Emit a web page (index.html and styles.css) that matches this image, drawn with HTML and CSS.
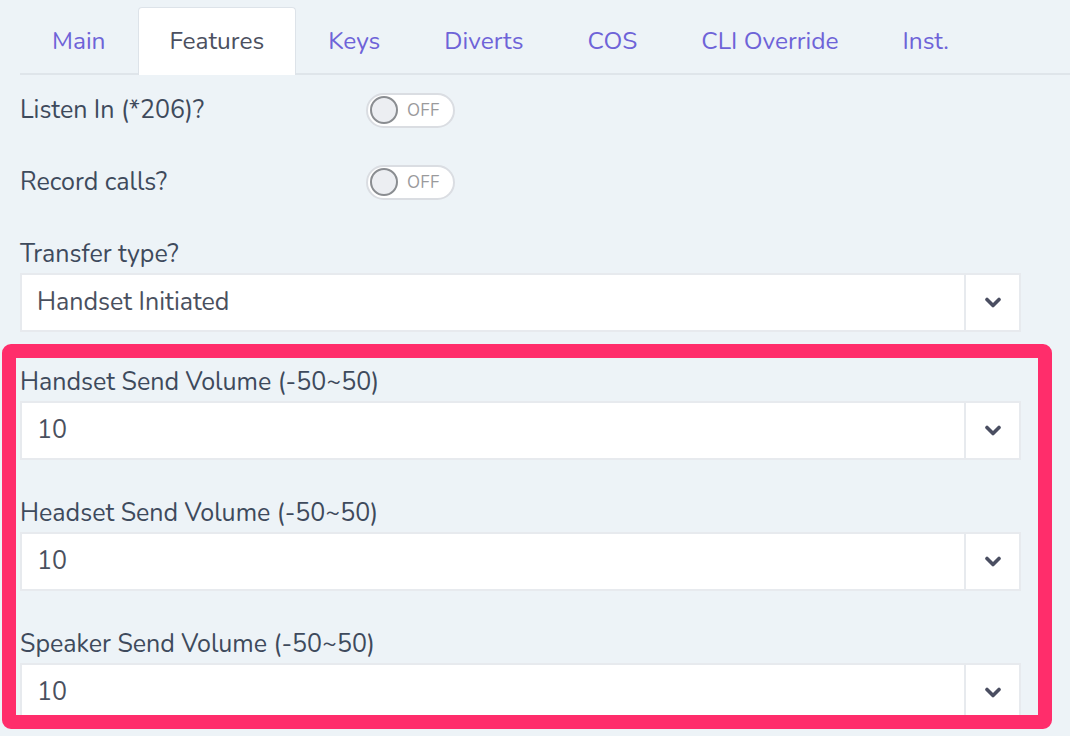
FILE: index.html
```html
<!DOCTYPE html>
<html lang="en">
<head>
<meta charset="utf-8">
<title>Features</title>
<link rel="stylesheet" href="styles.css">
</head>
<body>
<div class="page">
  <ul class="tabs">
    <li class="tab">Main</li>
    <li class="tab active">Features</li>
    <li class="tab">Keys</li>
    <li class="tab">Diverts</li>
    <li class="tab">COS</li>
    <li class="tab">CLI Override</li>
    <li class="tab">Inst.</li>
  </ul>
  <div class="form">
    <div class="toggle-row">
      <span class="label">Listen In (*206)?</span>
      <span class="toggle"><span class="knob"></span><span class="toggle-text">OFF</span></span>
    </div>
    <div class="toggle-row">
      <span class="label">Record calls?</span>
      <span class="toggle"><span class="knob"></span><span class="toggle-text">OFF</span></span>
    </div>
    <div class="group first">
      <div class="label">Transfer type?</div>
      <div class="select"><span class="value">Handset Initiated</span><span class="arrow"><svg width="16" height="11" viewBox="0 0 16 11"><path d="M2 2.5 L8 8.5 L14 2.5" fill="none" stroke="#4a4e61" stroke-width="3.6" stroke-linecap="round" stroke-linejoin="round"/></svg></span></div>
    </div>
    <div class="highlight-area">
      <div class="group">
        <div class="label">Handset Send Volume (-50~50)</div>
        <div class="select"><span class="value">10</span><span class="arrow"><svg width="16" height="11" viewBox="0 0 16 11"><path d="M2 2.5 L8 8.5 L14 2.5" fill="none" stroke="#4a4e61" stroke-width="3.6" stroke-linecap="round" stroke-linejoin="round"/></svg></span></div>
      </div>
      <div class="group">
        <div class="label">Headset Send Volume (-50~50)</div>
        <div class="select"><span class="value">10</span><span class="arrow"><svg width="16" height="11" viewBox="0 0 16 11"><path d="M2 2.5 L8 8.5 L14 2.5" fill="none" stroke="#4a4e61" stroke-width="3.6" stroke-linecap="round" stroke-linejoin="round"/></svg></span></div>
      </div>
      <div class="group">
        <div class="label">Speaker Send Volume (-50~50)</div>
        <div class="select"><span class="value">10</span><span class="arrow"><svg width="16" height="11" viewBox="0 0 16 11"><path d="M2 2.5 L8 8.5 L14 2.5" fill="none" stroke="#4a4e61" stroke-width="3.6" stroke-linecap="round" stroke-linejoin="round"/></svg></span></div>
      </div>
      <div class="highlight"></div>
    </div>
  </div>
</div>
</body>
</html>
```
FILE: styles.css
```css
* { box-sizing: border-box; }
html, body { margin: 0; padding: 0; }
body {
  background: #edf3f7;
  font-family: "Nunito", "Open Sans", "Noto Sans", sans-serif;
  color: #3e4a5c;
  width: 1070px;
  height: 736px;
  overflow: hidden;
}
.page { padding-left: 20px; padding-top: 7px; }
.tabs {
  list-style: none;
  margin: 0;
  padding: 0;
  display: flex;
  border-bottom: 2px solid #dfe5ea;
  height: 68px;
}
.tab {
  padding: 0 31px;
  font-size: 24.5px;
  line-height: 66px;
  color: #6e63d8;
  border: 1px solid transparent;
  border-bottom: none;
  border-radius: 4px 4px 0 0;
}
.tab.active {
  background: #ffffff;
  color: #4b5060;
  border-color: #dde3e9;
  height: 68px;
}
.form { padding-right: 49px; padding-top: 17px; }
.label { font-size: 25px; line-height: 30px; color: #3e4a5c; }
.toggle-row {
  display: grid;
  grid-template-columns: 346px auto;
  align-items: center;
  height: 36px;
  margin-bottom: 36px;
}
.toggle {
  width: 89px;
  height: 35px;
  border: 2px solid #dadde2;
  border-radius: 18px;
  background: #ffffff;
  display: flex;
  align-items: center;
  padding-left: 2px;
  gap: 9px;
}
.knob {
  width: 28px;
  height: 28px;
  border-radius: 50%;
  border: 2px solid #8a8d91;
  background: #eceef2;
}
.toggle-text { font-size: 17px; color: #9a9a9c; letter-spacing: 0.3px; }
.group { margin-bottom: 38px; }
.group.first { padding-top: 3px; margin-bottom: 35px; }
.group .label { margin-bottom: 4px; }
.select {
  display: flex;
  height: 59px;
  background: #ffffff;
  border: 2px solid #e7eaee;
}
.value {
  flex: 1;
  padding-left: 15px;
  font-size: 25px;
  line-height: 55px;
  color: #4a505e;
}
.arrow {
  width: 55px;
  border-left: 2px solid #e7eaee;
  display: flex;
  align-items: center;
  justify-content: center;
}
.highlight-area { position: relative; }
.highlight {
  position: absolute;
  left: -18px;
  top: -23px;
  width: 1050px;
  height: 385px;
  border: 14px solid #ff2d6b;
  border-radius: 9px;
}
```
